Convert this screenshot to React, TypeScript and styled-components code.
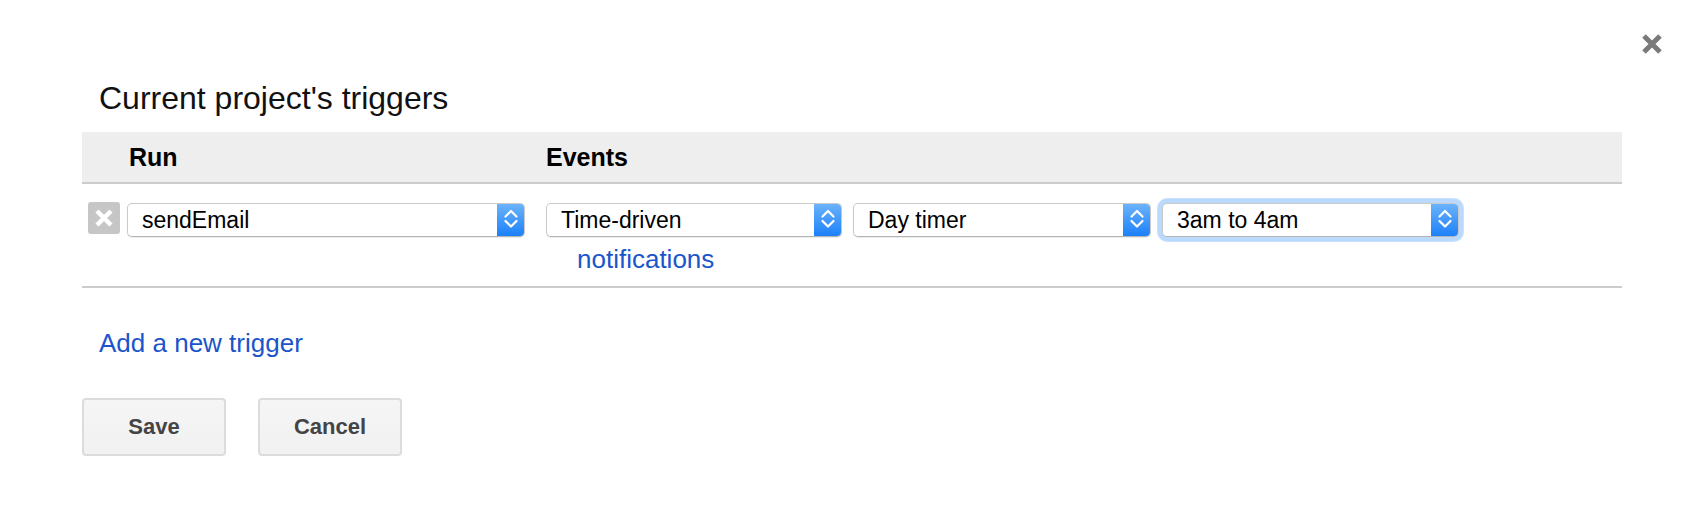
import React from "react";
import styled, { createGlobalStyle } from "styled-components";

const GlobalStyle = createGlobalStyle`
  html, body {
    margin: 0;
    padding: 0;
    background: #ffffff;
    font-family: "Liberation Sans", Arial, sans-serif;
    color: #000;
  }
  * { box-sizing: border-box; }
`;

const Dialog = styled.div`
  position: relative;
  width: 1704px;
  height: 506px;
  padding: 80px 82px 0 82px;
  overflow: hidden;
`;

const CloseButton = styled.button`
  position: absolute;
  top: 33px;
  right: 41px;
  width: 22px;
  height: 22px;
  padding: 0;
  border: 0;
  background: transparent;
  cursor: pointer;
  display: flex;
`;

const Title = styled.h2`
  margin: 0 0 15px 17px;
  font-size: 32px;
  font-weight: normal;
  line-height: 37px;
  color: #111;
`;

const Grid = styled.div`
  display: grid;
  grid-template-columns: 45px 419px 1fr;
  width: 1540px;
  border-bottom: 2px solid #cccccc;
`;

const HeaderRow = styled(Grid)`
  height: 52px;
  align-items: center;
  background: #eeeeee;
`;

const HeaderCell = styled.div<{ $indent?: number }>`
  font-size: 25px;
  font-weight: bold;
  padding-left: ${(p) => p.$indent ?? 0}px;
  color: #000;
`;

const TriggerRow = styled(Grid)`
  padding: 19px 0 12px;
  align-items: start;
`;

const DeleteIcon = styled.button`
  margin: -1px 0 0 6px;
  width: 32px;
  height: 32px;
  padding: 0;
  border: 0;
  border-radius: 3px;
  background: #c6c6c6;
  display: flex;
  align-items: center;
  justify-content: center;
`;

const EventsCell = styled.div`
  display: flex;
  flex-direction: column;
`;

const SelectRow = styled.div`
  display: flex;
  gap: 11px;
`;

const SelectBox = styled.div<{ $width: number; $focused?: boolean }>`
  width: ${(p) => p.$width}px;
  height: 34px;
  display: flex;
  align-items: center;
  background: #fff;
  border: 1px solid #c9c9c9;
  border-bottom-color: #b4b4b4;
  border-radius: 5px;
  box-shadow: ${(p) =>
    p.$focused
      ? "0 0 0 4px #bad9fc, 0 0 0 5px #c9e1fc"
      : "0 1px 1px rgba(0, 0, 0, 0.08)"};
  overflow: hidden;
`;

const SelectText = styled.span`
  flex: 1;
  padding-left: 14px;
  font-size: 23px;
  color: #000;
  white-space: nowrap;
`;

const Stepper = styled.span`
  width: 28px;
  height: 34px;
  margin: -1px -1px -1px 0;
  background: linear-gradient(#6db4fb, #1a7ff9);
  border-radius: 0 5px 5px 0;
  display: flex;
  align-items: center;
  justify-content: center;
`;

const Link = styled.a`
  font-size: 26px;
  color: #1a55cc;
  text-decoration: none;
  cursor: pointer;
`;

const NotificationsLink = styled(Link)`
  margin: 7px 0 0 31px;
  line-height: 30px;
`;

const AddLink = styled(Link)`
  display: block;
  margin: 40px 0 0 17px;
  line-height: 30px;
`;

const ButtonBar = styled.div`
  display: flex;
  gap: 32px;
  margin-top: 40px;
`;

const Button = styled.button`
  width: 144px;
  height: 58px;
  border: 2px solid #dcdcdc;
  border-radius: 4px;
  background: linear-gradient(#f5f5f5, #f1f1f1);
  font-family: "Liberation Sans", Arial, sans-serif;
  font-size: 22px;
  font-weight: bold;
  color: #444;
  cursor: pointer;
`;

const StepperIcon = () => (
  <svg width="28" height="34" viewBox="0 0 28 34">
    <path d="M8.5 13.5 L14 8 L19.5 13.5" fill="none" stroke="#fff" strokeWidth="2.2" strokeLinecap="round" strokeLinejoin="round" />
    <path d="M8.5 18 L14 23.5 L19.5 18" fill="none" stroke="#fff" strokeWidth="2.2" strokeLinecap="round" strokeLinejoin="round" />
  </svg>
);

const Select = ({ value, width, focused }: { value: string; width: number; focused?: boolean }) => (
  <SelectBox $width={width} $focused={focused}>
    <SelectText>{value}</SelectText>
    <Stepper>
      <StepperIcon />
    </Stepper>
  </SelectBox>
);

export default function App() {
  return (
    <>
      <GlobalStyle />
      <Dialog>
        <CloseButton aria-label="Close">
          <svg width="22" height="22" viewBox="0 0 22 22">
            <path d="M3 3 L19 19 M19 3 L3 19" stroke="#7a7a7a" strokeWidth="5" strokeLinecap="butt" />
          </svg>
        </CloseButton>
        <Title>Current project's triggers</Title>
        <HeaderRow>
          <div />
          <HeaderCell $indent={2}>Run</HeaderCell>
          <HeaderCell>Events</HeaderCell>
        </HeaderRow>
        <TriggerRow>
          <DeleteIcon aria-label="Delete trigger">
            <svg width="20" height="20" viewBox="0 0 20 20">
              <path d="M3 3 L17 17 M17 3 L3 17" stroke="#fff" strokeWidth="4.5" />
            </svg>
          </DeleteIcon>
          <Select value="sendEmail" width={398} />
          <EventsCell>
            <SelectRow>
              <Select value="Time-driven" width={296} />
              <Select value="Day timer" width={298} />
              <Select value="3am to 4am" width={297} focused />
            </SelectRow>
            <NotificationsLink>notifications</NotificationsLink>
          </EventsCell>
        </TriggerRow>
        <AddLink>Add a new trigger</AddLink>
        <ButtonBar>
          <Button>Save</Button>
          <Button>Cancel</Button>
        </ButtonBar>
      </Dialog>
    </>
  );
}
